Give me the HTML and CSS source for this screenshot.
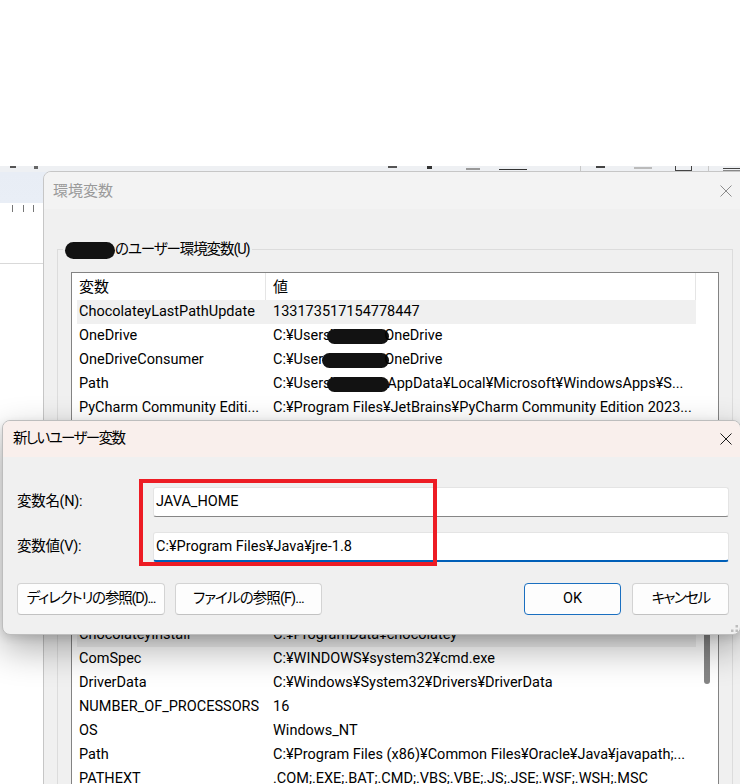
FILE: index.html
```html
<!DOCTYPE html>
<html lang="ja">
<head>
<meta charset="utf-8">
<title>環境変数</title>
<link rel="stylesheet" href="styles.css">
</head>
<body>
<div class="desktop">
  <div class="bg-app">
    <div class="bg-toolbar">
      <svg class="bg-marks" width="740" height="6" viewBox="0 0 740 6">
        <rect x="10" y="0" width="6" height="2" fill="#555"/>
        <rect x="34" y="0" width="4" height="3" fill="#666"/>
        <rect x="388" y="0" width="9" height="2" fill="#555"/>
        <rect x="427" y="0" width="5" height="3" fill="#333"/>
        <rect x="466" y="2" width="14" height="2" fill="#999"/>
        <rect x="499" y="3" width="28" height="1" fill="#333"/>
        <rect x="580" y="0" width="1" height="6" fill="#c8c8c8"/>
        <rect x="596" y="0" width="9" height="2" fill="#444"/>
        <rect x="634" y="1" width="18" height="2" fill="#bbb"/>
        <rect x="675" y="0" width="1" height="5" fill="#444"/>
        <rect x="691" y="0" width="1" height="5" fill="#444"/>
        <rect x="675" y="4" width="17" height="1" fill="#444"/>
        <rect x="708" y="0" width="1" height="6" fill="#c8c8c8"/>
        <rect x="723" y="2" width="17" height="1" fill="#444"/>
        <rect x="723" y="4" width="17" height="1" fill="#888"/>
      </svg>
    </div>
    <div class="bg-ruler">
      <svg width="43" height="10" viewBox="0 0 43 10">
        <rect x="12" y="2" width="1" height="7" fill="#777"/>
        <rect x="23" y="2" width="1" height="7" fill="#777"/>
        <rect x="33" y="2" width="1" height="7" fill="#777"/>
      </svg>
    </div>
    <div class="bg-gap"></div>
    <div class="bg-divider"></div>
  </div>

  <section class="env-dialog">
    <header class="env-title">
      <span class="env-title-text">環境変数</span>
      <svg class="close-icon" width="12" height="12" viewBox="0 0 12 12"><path d="M0.5 0.5 L11.5 11.5 M11.5 0.5 L0.5 11.5" stroke="#8c8c8c" stroke-width="1" fill="none"/></svg>
    </header>
    <div class="env-body">
      <div class="group group-user">
        <div class="group-label"><span class="blob blob-label"></span><span class="ja-tight">のユーザー環境変数(U)</span></div>
        <div class="list list-user">
          <div class="list-main">
            <div class="list-head">
              <div class="hcell hname">変数</div>
              <div class="hcell hvalue">値</div>
            </div>
            <div class="rows">
              <div class="row selected"><div class="cell name">ChocolateyLastPathUpdate</div><div class="cell value">133173517154778447</div></div>
              <div class="row"><div class="cell name">OneDrive</div><div class="cell value">C:¥Users¥<span class="blob blob-od"></span>OneDrive</div></div>
              <div class="row"><div class="cell name">OneDriveConsumer</div><div class="cell value">C:¥Users¥<span class="blob blob-odc"></span>OneDrive</div></div>
              <div class="row"><div class="cell name">Path</div><div class="cell value">C:¥Users¥<span class="blob blob-path"></span>AppData¥Local¥Microsoft¥WindowsApps¥S...</div></div>
              <div class="row"><div class="cell name">PyCharm Community Editi...</div><div class="cell value">C:¥Program Files¥JetBrains¥PyCharm Community Edition 2023...</div></div>
              <div class="row"><div class="cell name">TEMP</div><div class="cell value">C:¥Users¥AppData¥Local¥Temp</div></div>
              <div class="row"><div class="cell name">TMP</div><div class="cell value">C:¥Users¥AppData¥Local¥Temp</div></div>
            </div>
          </div>
          <div class="list-scroll"></div>
        </div>
      </div>

      <div class="group group-system">
        <div class="group-label">システム環境変数(S)</div>
        <div class="list list-system">
          <div class="list-main">
            <div class="list-head">
              <div class="hcell hname">変数</div>
              <div class="hcell hvalue">値</div>
            </div>
            <div class="rows">
              <div class="row selected"><div class="cell name">ChocolateyInstall</div><div class="cell value">C:¥ProgramData¥chocolatey</div></div>
              <div class="row"><div class="cell name">ComSpec</div><div class="cell value">C:¥WINDOWS¥system32¥cmd.exe</div></div>
              <div class="row"><div class="cell name">DriverData</div><div class="cell value">C:¥Windows¥System32¥Drivers¥DriverData</div></div>
              <div class="row"><div class="cell name">NUMBER_OF_PROCESSORS</div><div class="cell value">16</div></div>
              <div class="row"><div class="cell name">OS</div><div class="cell value">Windows_NT</div></div>
              <div class="row"><div class="cell name">Path</div><div class="cell value">C:¥Program Files (x86)¥Common Files¥Oracle¥Java¥javapath;...</div></div>
              <div class="row"><div class="cell name">PATHEXT</div><div class="cell value">.COM;.EXE;.BAT;.CMD;.VBS;.VBE;.JS;.JSE;.WSF;.WSH;.MSC</div></div>
            </div>
          </div>
          <div class="list-scroll"><div class="thumb"></div></div>
        </div>
      </div>
    </div>
  </section>

  <section class="new-dialog">
    <header class="new-title">
      <span class="new-title-text">新しいユーザー変数</span>
      <svg class="close-icon" width="12" height="12" viewBox="0 0 12 12"><path d="M0.5 0.5 L11.5 11.5 M11.5 0.5 L0.5 11.5" stroke="#1a1a1a" stroke-width="1" fill="none"/></svg>
    </header>
    <div class="new-body">
      <div class="field">
        <label class="field-label">変数名(N):</label>
        <div class="input">JAVA_HOME</div>
      </div>
      <div class="field">
        <label class="field-label">変数値(V):</label>
        <div class="input focused">C:¥Program Files¥Java¥jre-1.8</div>
      </div>
      <div class="buttons">
        <button class="btn btn-dir">ディレクトリの参照(D)...</button>
        <button class="btn btn-file">ファイルの参照(F)...</button>
        <button class="btn btn-ok">OK</button>
        <button class="btn btn-cancel">キャンセル</button>
      </div>
    </div>
    <svg class="grip" width="7" height="7" viewBox="0 0 7 7">
      <rect x="4.5" y="0" width="2.5" height="2.5" fill="#bdbdbd"/>
      <rect x="4.5" y="4.5" width="2.5" height="2.5" fill="#bdbdbd"/>
      <rect x="0" y="4.5" width="2.5" height="2.5" fill="#bdbdbd"/>
    </svg>
  </section>

  <div class="annotation"></div>
</div>
</body>
</html>
```

FILE: styles.css
```css
* { box-sizing: border-box; }

body {
  margin: 0;
}

.desktop {
  position: relative;
  width: 740px;
  height: 784px;
  overflow: hidden;
  background: #ffffff;
  font-family: Roboto, "Noto Sans CJK JP", sans-serif;
  font-size: 14.5px;
  line-height: 20px;
  color: #000;
  font-feature-settings: "palt";
}

/* background application */
.bg-app {
  position: absolute;
  top: 166px;
  left: 0;
  right: 0;
  bottom: 0;
  background: #fff;
}
.bg-toolbar {
  height: 37px;
  background: linear-gradient(#eef0f3 0, #eef0f3 6px, #e8edf5 6px, #e9eef6 100%);
}
.bg-marks { display: block; }
.bg-ruler {
  height: 10px;
  background: #fff;
}
.bg-ruler svg { display: block; }
.bg-gap { height: 50px; }
.bg-divider {
  height: 1px;
  background: #d9d9d9;
}

/* environment variables dialog (inactive, behind) */
.env-dialog {
  position: absolute;
  left: 43px;
  top: 171px;
  width: 706px;
  height: 640px;
  background: #f0f0f0;
  border: 1px solid #c6c6c6;
  border-top-left-radius: 8px;
  overflow: hidden;
}
.env-title {
  height: 37px;
  background: #f3f3f3;
  display: flex;
  align-items: center;
  justify-content: space-between;
  padding: 0 16px 0 9px;
}
.env-title-text {
  color: #9a9a9a;
  font-size: 15px;
}
.close-icon { display: block; }

.env-body {
  padding: 40px 0 0 13px;
}
.group {
  width: 676px;
  border: 1px solid #dcdcdc;
  padding: 0 13px 13px;
}
.group-user {
  height: 306px;
  margin-bottom: 17px;
}
.group-system {
  height: 260px;
}
.group-label {
  display: flex;
  align-items: center;
  width: fit-content;
  height: 20px;
  margin: -10px 0 12px -8px;
  padding: 0 2px;
  background: #f0f0f0;
  white-space: nowrap;
}
.ja-tight {
  letter-spacing: -1.1px;
}

.list {
  display: flex;
  background: #fff;
  border: 1px solid #838383;
  height: 230px;
}
.list-main {
  width: 624px;
  overflow: hidden;
}
.list-scroll {
  flex: 1;
  position: relative;
}
.thumb {
  margin: 3px 0 0 8px;
  width: 6px;
  height: 85px;
  border-radius: 3px;
  background: #858585;
}
.list-head {
  display: flex;
  height: 27px;
}
.hcell {
  display: flex;
  align-items: center;
  padding-left: 7px;
  border-right: 1px solid #e5e5e5;
  font-size: 15px;
}
.hname { width: 194px; }
.hvalue { width: 430px; }

.rows {
  padding-left: 5px;
}
.row {
  display: flex;
  height: 24px;
  align-items: center;
  white-space: nowrap;
}
.row.selected { background: #f0f0f0; }
.cell {
  overflow: hidden;
}
.cell.name {
  width: 188px;
  padding-left: 2px;
}
.cell.value {
  flex: 1;
  padding-left: 8px;
}

/* redaction blobs */
.blob {
  display: inline-block;
  vertical-align: middle;
  height: 15px;
  border-radius: 8px;
  background: #121212;
}
.blob-label {
  width: 50px;
  height: 17px;
  border-radius: 9px;
}
.blob-od {
  width: 62px;
  margin-left: -11px;
  margin-right: -5px;
}
.blob-odc {
  width: 67px;
  margin-left: -16px;
  margin-right: -5px;
}
.blob-path {
  width: 62px;
  margin-left: -11px;
  margin-right: -2px;
}

/* new user variable dialog (active) */
.new-dialog {
  position: absolute;
  left: 2px;
  top: 420px;
  width: 739px;
  height: 215px;
  background: #f0f0f0;
  border: 1px solid #bdbdbd;
  border-radius: 8px;
  overflow: hidden;
  box-shadow: 0 14px 36px rgba(0, 0, 0, 0.32), 0 3px 8px rgba(0, 0, 0, 0.12);
}
.new-title {
  height: 36px;
  background: #f9efec;
  display: flex;
  align-items: center;
  justify-content: space-between;
  padding: 0 8px 0 10px;
}
.new-title-text {
  font-size: 14.5px;
  letter-spacing: -1.6px;
}
.new-body {
  padding: 30px 11px 0 14px;
}
.field {
  display: flex;
  align-items: center;
  height: 30px;
  margin-bottom: 15px;
}
.field-label {
  width: 136px;
  letter-spacing: -0.3px;
}
.input {
  width: 576px;
  height: 30px;
  background: #fff;
  border: 1px solid #e4e4e4;
  border-bottom: 1px solid #868686;
  border-radius: 3px;
  padding: 4px 0 0 2px;
  white-space: nowrap;
}
.input.focused {
  border-bottom: 2px solid #005fb8;
}
.buttons {
  display: flex;
  margin-top: 21px;
}
.btn {
  height: 32px;
  font: inherit;
  color: #000;
  background: #fdfdfd;
  border: 1px solid #d3d3d3;
  border-bottom-color: #c2c2c2;
  border-radius: 4px;
  padding: 0;
  white-space: nowrap;
  font-feature-settings: "palt";
}
.btn-dir { width: 148px; margin-right: 10px; letter-spacing: -1.2px; }
.btn-file { width: 147px; letter-spacing: -0.9px; }
.btn-ok {
  width: 97px;
  margin-left: auto;
  margin-right: 11px;
  border: 1px solid #1a6fc0;
}
.btn-cancel { width: 97px; letter-spacing: -1.6px; }

.grip {
  position: absolute;
  right: 2px;
  bottom: 2px;
}

.annotation {
  position: absolute;
  left: 139px;
  top: 479px;
  width: 298px;
  height: 87px;
  border: 4px solid #ed1c24;
}
```
